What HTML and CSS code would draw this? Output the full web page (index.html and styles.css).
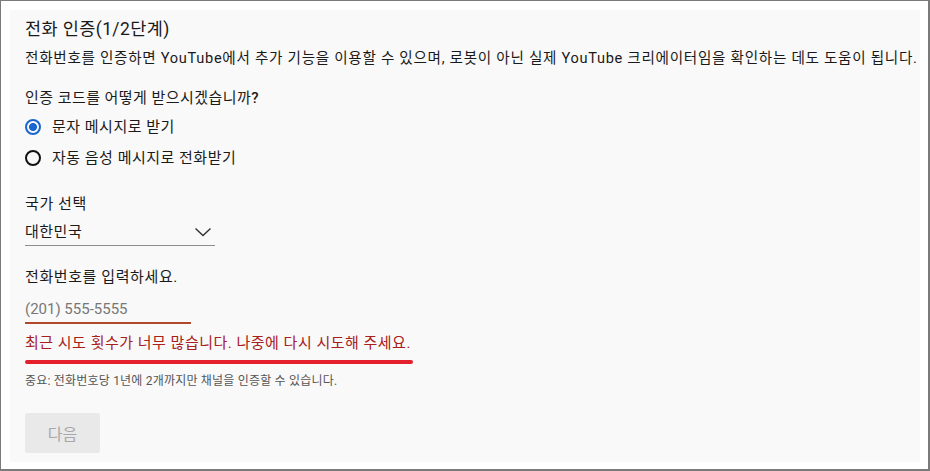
FILE: index.html
```html
<!DOCTYPE html>
<html lang="ko">
<head>
    <meta charset="UTF-8">
    <title>전화 인증</title>
    <link rel="stylesheet" href="styles.css">
</head>
<body>
    <div class="frame">
        <div class="panel">
            <h1 class="title">전화 인증(1/2단계)</h1>
            <p class="desc">전화번호를 인증하면 YouTube에서 추가 기능을 이용할 수 있으며, 로봇이 아닌 실제 YouTube 크리에이터임을 확인하는 데도 도움이 됩니다.</p>

            <p class="question">인증 코드를 어떻게 받으시겠습니까<b>?</b></p>
            <label class="radio">
                <span class="dot checked"></span>
                <span>문자 메시지로 받기</span>
            </label>
            <label class="radio">
                <span class="dot"></span>
                <span>자동 음성 메시지로 전화받기</span>
            </label>

            <p class="label country-label">국가 선택</p>
            <div class="select">
                <span>대한민국</span>
                <svg width="18" height="10" viewBox="0 0 18 10"><path d="M1.5 1.5 L9 8.5 L16.5 1.5" fill="none" stroke="#333" stroke-width="1.4"/></svg>
            </div>

            <p class="label phone-label">전화번호를 입력하세요.</p>
            <div class="phone">(201) 555-5555</div>
            <p class="error">최근 시도 횟수가 너무 많습니다. 나중에 다시 시도해 주세요.</p>
            <div class="mark"></div>
            <p class="note">중요: 전화번호당 1년에 2개까지만 채널을 인증할 수 있습니다.</p>

            <button class="next" disabled>다음</button>
        </div>
    </div>
</body>
</html>
```

FILE: styles.css
```css
html, body {
    margin: 0;
    padding: 0;
}

body {
    width: 930px;
    height: 471px;
    background: #fff;
    font-family: Roboto, "Noto Sans CJK KR", sans-serif;
    color: #1a1a1a;
}

.frame {
    box-sizing: border-box;
    width: 930px;
    height: 471px;
    border-style: solid;
    border-color: #7a7a7a;
    border-width: 1px 2px 2px 1px;
    padding: 9px 8px 7px 9px;
}

.panel {
    box-sizing: border-box;
    height: 100%;
    background: #f9f9f9;
    padding: 7px 15px 0 15px;
    display: flex;
    flex-direction: column;
    align-items: flex-start;
}

p, h1 {
    margin: 0;
}

.title {
    font-size: 17.5px;
    font-weight: 400;
    line-height: 24px;
    letter-spacing: 0.4px;
}

.desc {
    margin-top: 7px;
    font-size: 14.6px;
    line-height: 20px;
    letter-spacing: 0.7px;
    white-space: nowrap;
}

.question {
    margin-top: 20px;
    font-size: 15px;
    line-height: 20px;
    letter-spacing: 0.45px;
}

.question b {
    font-weight: 500;
}

.radio {
    display: flex;
    align-items: center;
    gap: 11px;
    font-size: 15px;
    line-height: 20px;
    letter-spacing: 0.5px;
    margin-top: 9px;
}

.radio + .radio {
    margin-top: 11px;
}

.dot {
    box-sizing: border-box;
    width: 16px;
    height: 16px;
    border-radius: 50%;
    border: 2px solid #111;
}

.dot.checked {
    border-color: #1a66d0;
    background: radial-gradient(circle, #1a66d0 0 3.6px, transparent 4.4px);
}

.label {
    font-size: 15px;
    line-height: 20px;
    letter-spacing: 0.6px;
}

.country-label {
    margin-top: 26px;
}

.select {
    box-sizing: border-box;
    width: 190px;
    margin-top: 8px;
    display: flex;
    justify-content: space-between;
    align-items: center;
    font-size: 15px;
    line-height: 20px;
    letter-spacing: 0.5px;
    padding-bottom: 3px;
    padding-right: 3px;
    border-bottom: 1.5px solid #8c8c8c;
}

.phone-label {
    margin-top: 21px;
}

.phone {
    box-sizing: border-box;
    width: 166px;
    margin-top: 12px;
    font-size: 15px;
    line-height: 20px;
    color: #777;
    padding-bottom: 3px;
    border-bottom: 2px solid #b0482c;
}

.error {
    margin-top: 9px;
    font-size: 15px;
    line-height: 20px;
    letter-spacing: 0.5px;
    color: #a8201a;
}

.mark {
    width: 388px;
    height: 4px;
    margin-top: 7px;
    border-radius: 2px;
    background: #e3202b;
}

.note {
    margin-top: 9px;
    font-size: 12px;
    line-height: 16px;
    letter-spacing: 0.2px;
    color: #555;
}

.next {
    margin-top: 24px;
    width: 75px;
    height: 40px;
    border: none;
    border-radius: 2px;
    background: #e9e9e9;
    color: #a8a8a8;
    font-family: inherit;
    font-size: 16px;
}
```
